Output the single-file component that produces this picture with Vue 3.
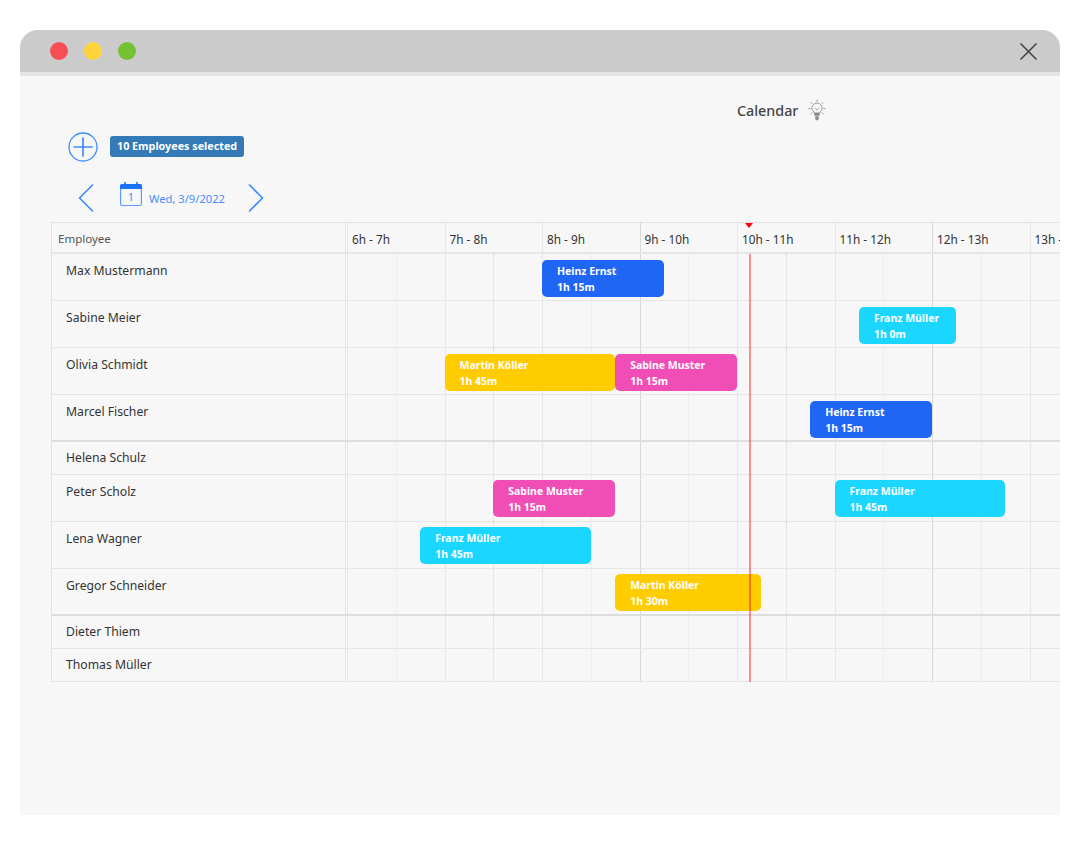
<script setup>
const hourLabels = ['6h - 7h', '7h - 8h', '8h - 9h', '9h - 10h', '10h - 11h', '11h - 12h', '12h - 13h', '13h - 14h']
const HOUR = 97.5
const slots = Array.from({ length: 15 }, (_, i) => i)
const slotClass = (i) => ({
  half: i % 2 === 1,
  strong: i === 6 || i === 12,
  dotted: i === 3 || i === 9,
})
const C = { blue: '#1f66f5', cyan: '#1bd6ff', yellow: '#ffcc00', pink: '#f04db6' }
const rows = [
  { name: 'Max Mustermann', events: [{ who: 'Heinz Ernst', start: 120, min: 75, c: C.blue }] },
  { name: 'Sabine Meier', events: [{ who: 'Franz Müller', start: 315, min: 60, c: C.cyan }] },
  { name: 'Olivia Schmidt', events: [
    { who: 'Martin Köller', start: 60, min: 105, c: C.yellow },
    { who: 'Sabine Muster', start: 165, min: 75, c: C.pink },
  ] },
  { name: 'Marcel Fischer', strong: true, events: [{ who: 'Heinz Ernst', start: 285, min: 75, c: C.blue }] },
  { name: 'Helena Schulz', compact: true, events: [] },
  { name: 'Peter Scholz', events: [
    { who: 'Sabine Muster', start: 90, min: 75, c: C.pink },
    { who: 'Franz Müller', start: 300, min: 105, c: C.cyan },
  ] },
  { name: 'Lena Wagner', events: [{ who: 'Franz Müller', start: 45, min: 105, c: C.cyan }] },
  { name: 'Gregor Schneider', strong: true, events: [{ who: 'Martin Köller', start: 165, min: 90, c: C.yellow }] },
  { name: 'Dieter Thiem', compact: true, events: [] },
  { name: 'Thomas Müller', compact: true, events: [] },
]
const duration = (m) => `${Math.floor(m / 60)}h ${m % 60}m`
const eventStyle = (e) => ({
  left: `${(e.start / 60) * HOUR}px`,
  width: `${(e.min / 60) * HOUR}px`,
  background: e.c,
})
</script>

<template>
  <div class="page">
    <div class="window">
      <header class="titlebar">
        <span class="light red"></span>
        <span class="light yellow"></span>
        <span class="light green"></span>
        <svg class="close" width="19" height="19" viewBox="0 0 19 19">
          <path d="M1.5 1.5 17.5 17.5M17.5 1.5 1.5 17.5" stroke="#444" stroke-width="1.6" fill="none" />
        </svg>
      </header>

      <main class="content">
        <div class="title">
          <span>Calendar</span>
          <svg class="bulb" width="18" height="22" viewBox="0 0 20 24" fill="none" stroke="#9a9a9a">
            <path d="M10 0.5v2.5M3 3.5l1.8 1.8M17 3.5l-1.8 1.8M0.5 10.5H3M17 10.5h2.5M3 16.5l1.8-1.5M17 16.5l-1.8-1.5" stroke-width="1.1" />
            <path d="M7 15.5c0-2-2.7-2.5-2.7-5.5a5.7 5.7 0 0 1 11.4 0c0 3-2.7 3.5-2.7 5.5z" stroke-width="1.1" />
            <path d="M7.5 9.5 10 12l2.5-2.5" stroke-width="1" />
            <path d="M7 15h6v3.5H7z" fill="#8a8a8a" stroke="none" />
            <path d="M8 19h4v2.5L11 23.5H9L8 21.5z" fill="#8a8a8a" stroke="none" />
          </svg>
        </div>

        <div class="selection">
          <svg width="30" height="30" viewBox="0 0 30 30" fill="none" stroke="#3f8cff">
            <circle cx="15" cy="15" r="14" stroke-width="1.3" />
            <path d="M15 6v18M6 15h18" stroke-width="1.7" stroke-linecap="round" />
          </svg>
          <span class="badge">10 Employees selected</span>
        </div>

        <div class="datebar">
          <svg width="16" height="28" viewBox="0 0 16 28" fill="none" stroke="#3f8cff">
            <path d="M14.5 1 1.5 14 14.5 27" stroke-width="1.7" stroke-linecap="round" stroke-linejoin="round" />
          </svg>
          <svg class="cal" width="24" height="26" viewBox="0 0 24 26">
            <rect x="1.6" y="6" width="20.8" height="18.5" rx="1.5" fill="none" stroke="#5f9dff" stroke-width="1.2" />
            <path d="M1 8V4.5A1.5 1.5 0 0 1 2.5 3h19A1.5 1.5 0 0 1 23 4.5V8z" fill="#1a73ff" />
            <path d="M6 1v3M18 1v3" stroke="#1a73ff" stroke-width="1.6" />
            <text x="12" y="20" text-anchor="middle" class="cal-day">1</text>
          </svg>
          <span class="date">Wed, 3/9/2022</span>
          <svg width="16" height="28" viewBox="0 0 16 28" fill="none" stroke="#3f8cff">
            <path d="M1.5 1 14.5 14 1.5 27" stroke-width="1.7" stroke-linecap="round" stroke-linejoin="round" />
          </svg>
        </div>

        <section class="grid">
          <div class="row head">
            <div class="name">Employee</div>
            <div class="track hours">
              <div v-for="h in hourLabels" :key="h" class="hour" :class="{ strong: h === '9h - 10h' || h === '12h - 13h' }">{{ h }}</div>
              <span class="caret"></span>
            </div>
          </div>

          <div class="body">
            <div v-for="r in rows" :key="r.name" class="row" :class="{ compact: r.compact, 'row-strong': r.strong }">
              <div class="name">{{ r.name }}</div>
              <div class="track">
                <span v-for="i in slots" :key="i" class="slot" :class="slotClass(i)"></span>
                <div v-for="e in r.events" :key="e.who + e.start" class="event" :style="eventStyle(e)">
                  <div>{{ e.who }}</div>
                  <div>{{ duration(e.min) }}</div>
                </div>
              </div>
            </div>
            <span class="now"></span>
          </div>
        </section>
      </main>
    </div>
  </div>
</template>

<style>
html, body { margin: 0; background: #fff; }
</style>

<style scoped>
.page { width: 1080px; height: 845px; padding: 30px 20px; box-sizing: border-box; font-family: "Noto Sans", "Open Sans", sans-serif; }
.window { width: 1040px; height: 785px; background: #f7f7f7; border-radius: 18px 18px 0 0; overflow: hidden; display: flex; flex-direction: column; }
.titlebar { height: 42px; flex: none; background: #cbcbcb; border-bottom: 4px solid #e6e6e6; display: flex; align-items: center; padding-left: 30px; gap: 16px; padding-right: 22px; }
.light { width: 18px; height: 18px; border-radius: 50%; }
.light.red { background: #f44f56; }
.light.yellow { background: #ffd43a; }
.light.green { background: #76c034; }
.close { margin-left: auto; }
.content { flex: 1; display: flex; flex-direction: column; padding-left: 31px; min-height: 0; }
.title { height: 26px; margin-top: 21px; padding-left: 686px; display: flex; align-items: center; gap: 10px; font-size: 14.3px; font-weight: 500; color: #444; }
.selection { height: 30px; margin-top: 9px; padding-left: 17px; display: flex; align-items: center; gap: 12px; }
.badge { height: 21px; line-height: 20px; padding: 0 7px; margin-bottom: 2px; background: #337ab7; color: #fff; border-radius: 3px; font-size: 10.75px; font-weight: 700; white-space: nowrap; }
.datebar { height: 30px; margin-top: 21px; padding-left: 27px; display: flex; align-items: center; }
.cal { margin-left: 25px; margin-top: -8px; }
.cal-day { font-size: 11px; fill: #3f8cff; font-family: "Noto Sans", sans-serif; }
.date { margin-left: 6px; margin-right: 23px; font-size: 11.2px; color: #4a8cff; }
.grid { margin-top: 9px; border-top: 1px solid #e2e2e2; }
.row { display: flex; height: 47px; box-sizing: border-box; border-bottom: 1px solid #e6e6e6; }
.row.head { height: 31px; border-bottom: 2px solid #e6e6e6; }
.row.compact { height: 33px; }
.row.row-strong { height: 46.75px; border-bottom: 2px solid #dedede; }
.name { width: 295px; margin-right: 1px; flex: none; box-sizing: border-box; padding: 8px 0 0 14px; border-left: 1px solid #e2e2e2; border-right: 1.5px solid #e6e6e6; font-size: 12.2px; line-height: 17px; color: #333; }
.row.compact .name { padding-top: 7.5px; }
.head .name { padding: 7px 0 0 6px; font-size: 11.5px; color: #555; }
.track { position: relative; flex: none; width: 730px; display: flex; }
.hours { width: 790px; }
.hour { flex: none; width: 97.5px; box-sizing: border-box; padding: 8px 0 0 4px; border-left: 1.5px solid #e6e6e6; font-size: 11.8px; line-height: 17px; color: #333; white-space: nowrap; }
.hour.strong { border-left: 1.5px solid #d8d8d8; }
.caret { position: absolute; left: 398px; top: 0; width: 0; height: 0; border: 4.5px solid transparent; border-top: 5px solid #f00; border-bottom: 0; }
.slot { flex: none; width: 48.75px; box-sizing: border-box; border-left: 1.5px solid #e6e6e6; }
.slot.half { border-left: 1.5px solid #ededed; }
.slot.strong { border-left: 1.5px solid #d8d8d8; }
.slot.dotted { border-left: 1.5px dotted #d8d8d8; }
.event { position: absolute; top: 5.5px; height: 37px; box-sizing: border-box; padding: 3px 0 0 15px; border-radius: 5px; color: #fff; font-size: 10.5px; font-weight: 700; line-height: 16px; white-space: nowrap; overflow: hidden; }
.body { position: relative; }
.now { position: absolute; left: 698px; top: 0; bottom: 0; width: 1.6px; background: rgba(255, 0, 0, 0.42); }
</style>
